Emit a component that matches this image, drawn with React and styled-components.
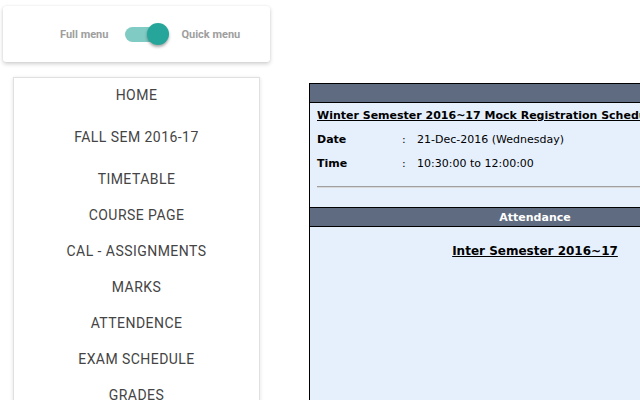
import React from "react";
import styled, { createGlobalStyle } from "styled-components";

const GlobalStyle = createGlobalStyle`
  html, body {
    margin: 0;
    padding: 0;
    background: #fff;
    overflow: hidden;
  }
  body {
    font-family: Roboto, "Liberation Sans", sans-serif;
  }
`;

const Page = styled.div`
  display: flex;
  width: 640px;
  height: 400px;
  overflow: hidden;
`;

const Sidebar = styled.div`
  flex: 0 0 270px;
  display: flex;
  flex-direction: column;
`;

const SwitchCard = styled.div`
  flex-shrink: 0;
  margin: 6px 0 0 3px;
  width: 267px;
  height: 56px;
  box-sizing: border-box;
  background: #fff;
  border-radius: 3px;
  box-shadow: 0 2px 4px rgba(0, 0, 0, 0.18), 0 0 2px rgba(0, 0, 0, 0.08);
  display: flex;
  align-items: center;
  padding-left: 57px;
  padding-top: 1px;
`;

const SwitchLabel = styled.span`
  font-family: Roboto, sans-serif;
  font-weight: 700;
  font-size: 11px;
  color: #9e9e9e;
`;

const Track = styled.span`
  position: relative;
  display: inline-block;
  width: 38px;
  height: 15px;
  border-radius: 8px;
  background: #80cbc4;
  margin: 0 ${(p) => p.gap}px 0 17px;
`;

const Thumb = styled.span`
  position: absolute;
  top: -4px;
  left: 22px;
  width: 22px;
  height: 22px;
  border-radius: 50%;
  background: #26a69a;
  box-shadow: 0 2px 3px rgba(0, 0, 0, 0.35);
`;

const Menu = styled.nav`
  flex-shrink: 0;
  margin: 15px 0 0 13px;
  width: 247px;
  box-sizing: border-box;
  border: 1px solid #e0e0e0;
  border-bottom: none;
  box-shadow: 0 1px 4px rgba(0, 0, 0, 0.12);
  display: flex;
  flex-direction: column;
`;

const MenuItem = styled.a`
  display: flex;
  align-items: center;
  justify-content: center;
  box-sizing: border-box;
  padding-bottom: 2px;
  height: ${(p) => (p.tall ? 48 : 36)}px;
  font-family: Roboto, sans-serif;
  font-size: 14px;
  letter-spacing: 0.45px;
  color: #444;
  text-decoration: none;
  flex-shrink: 0;
`;

const Main = styled.div`
  flex: 1;
  display: flex;
  flex-direction: column;
  padding-left: 39px;
`;

const BulletRow = styled.div`
  flex-shrink: 0;
  display: flex;
  justify-content: flex-end;
  padding: 46px 5px 0 0;
  height: 83px;
  box-sizing: border-box;
`;

const Bullet = styled.span`
  width: 4px;
  height: 4px;
  border-radius: 50%;
  background: #000;
`;

const Table = styled.table`
  width: 452px;
  flex-shrink: 0;
  border-collapse: collapse;
  background: #e6f0fd;
  font-family: "DejaVu Sans", Verdana, sans-serif;
  font-size: 11px;
  color: #000;
  td, th {
    border: 1px solid #000;
    padding: 0;
  }
`;

const HeadCell = styled.th`
  background: #5f6b80;
  color: #fff;
  font-weight: 700;
  font-size: 11px;
  height: 18px;
  text-align: center;
`;

const Body = styled.div`
  padding: ${(p) => p.pad || "0 0 0 7px"};
  height: ${(p) => p.h}px;
  box-sizing: border-box;
`;

const Title = styled.div`
  font-weight: 700;
  font-size: ${(p) => (p.center ? 12 : 11)}px;
  text-decoration: underline;
  white-space: nowrap;
  height: 23px;
  line-height: 23px;
  text-align: ${(p) => (p.center ? "center" : "left")};
`;

const InfoRow = styled.div`
  display: flex;
  height: 24px;
  align-items: center;
  white-space: nowrap;
`;

const InfoLabel = styled.span`
  width: 85px;
  font-weight: 700;
`;

const Colon = styled.span`
  width: 15px;
`;

const Rule = styled.hr`
  margin: 11px 0 0 0;
  border: none;
  border-top: 1px solid #a0a0a0;
  border-bottom: 1px solid #d8d8d8;
`;

const items = [
  ["HOME"],
  ["FALL SEM 2016-17", true],
  ["TIMETABLE"],
  ["COURSE PAGE"],
  ["CAL - ASSIGNMENTS"],
  ["MARKS"],
  ["ATTENDENCE"],
  ["EXAM SCHEDULE"],
  ["GRADES"],
];

export default function App() {
  return (
    <>
      <GlobalStyle />
      <Page>
        <Sidebar>
          <SwitchCard>
            <SwitchLabel>Full menu</SwitchLabel>
            <Track gap={18}>
              <Thumb />
            </Track>
            <SwitchLabel>Quick menu</SwitchLabel>
          </SwitchCard>
          <Menu>
            {items.map(([label, tall]) => (
              <MenuItem key={label} tall={tall ? 1 : 0} href="#">
                {label}
              </MenuItem>
            ))}
          </Menu>
        </Sidebar>
        <Main>
          <BulletRow>
            <Bullet />
          </BulletRow>
          <Table>
            <tbody>
              <tr>
                <HeadCell />
              </tr>
              <tr>
                <td>
                  <Body h={104} pad="1px 0 0 7px">
                    <Title>Winter Semester 2016~17 Mock Registration Schedule</Title>
                    <InfoRow>
                      <InfoLabel>Date</InfoLabel>
                      <Colon>:</Colon>
                      <span>21-Dec-2016 (Wednesday)</span>
                    </InfoRow>
                    <InfoRow>
                      <InfoLabel>Time</InfoLabel>
                      <Colon>:</Colon>
                      <span>10:30:00 to 12:00:00</span>
                    </InfoRow>
                    <Rule />
                  </Body>
                </td>
              </tr>
              <tr>
                <HeadCell>Attendance</HeadCell>
              </tr>
              <tr>
                <td>
                  <Body h={300} pad="13px 0 0 0">
                    <Title center>Inter Semester 2016~17</Title>
                  </Body>
                </td>
              </tr>
            </tbody>
          </Table>
        </Main>
      </Page>
    </>
  );
}
